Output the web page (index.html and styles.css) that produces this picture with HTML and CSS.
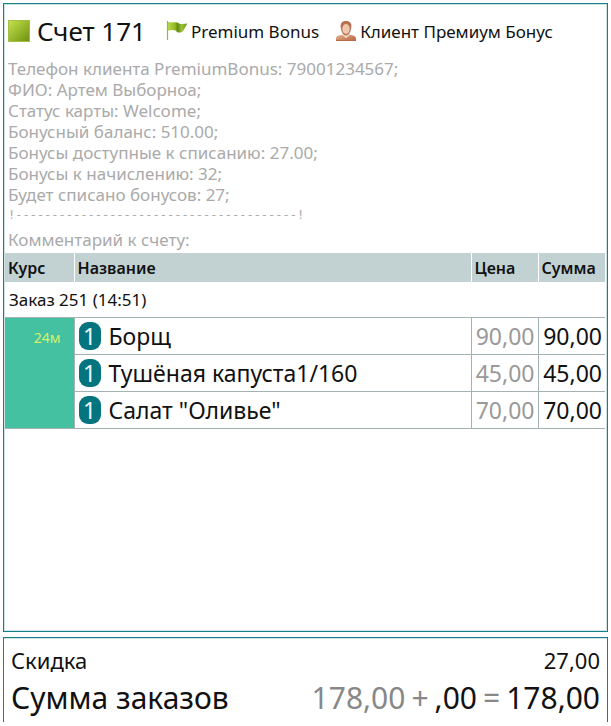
FILE: index.html
```html
<!DOCTYPE html>
<html lang="ru">
<head>
    <meta charset="UTF-8">
    <meta name="viewport" content="width=device-width, initial-scale=1.0">
    <title>Счет 171</title>
    <link rel="stylesheet" href="styles.css">
</head>
<body>
    <main class="panel bill">
        <!-- Bill title and tags -->
        <header class="bill-header">
            <span class="status"></span>
            <h1>Счет 171</h1>
            <div class="tag tag-bonus">
                <svg width="22" height="22" viewBox="0 0 22 22" aria-hidden="true">
                    <defs>
                        <linearGradient id="flag" x1="0" x2="1" y1="0" y2="0">
                            <stop offset="0" stop-color="#b5d84a"/>
                            <stop offset="0.35" stop-color="#94bb25"/>
                            <stop offset="0.5" stop-color="#618b12"/>
                            <stop offset="0.7" stop-color="#9bc432"/>
                            <stop offset="1" stop-color="#688f1c"/>
                        </linearGradient>
                    </defs>
                    <path d="M1.5 1v19" stroke="#96b453" stroke-width="1.2"/>
                    <path d="M2 2c3 .8 6 .2 9 .4 1.500.2 2 1.300 4 1.500 2 .1 4 0 6.500-.3-2 2.500-2.500 5-4.500 7.300-1.500 1.800-4.500 2-6 1-1-1-1-1.500-2.500-1.700-2.500-.3-4-.2-6.500.5z" fill="url(#flag)"/>
                </svg>
                <span>Premium Bonus</span>
            </div>
            <div class="tag">
                <svg width="22" height="22" viewBox="0 0 22 22" aria-hidden="true">
                    <defs>
                        <linearGradient id="skin" x1="0" x2="1" y1="0" y2="1">
                            <stop offset="0" stop-color="#e6b292"/>
                            <stop offset="1" stop-color="#b5633d"/>
                        </linearGradient>
                    </defs>
                    <path d="M1 21v-2.500c0-2.500 3-3 6-3.700l4 3 4-3c3 .7 6 1.200 6 3.700V21z" fill="url(#skin)"/>
                    <path d="M7.500 14.500L11 18l3.500-3.500v-2h-7z" fill="#f0d3bd"/>
                    <path d="M6 9C4.500 3.500 7 1 11 1s6.500 2.500 5 8c-.5 3.500-2.500 6.500-5 6.500S6.500 12.500 6 9z" fill="#b87153"/>
                    <ellipse cx="11" cy="9" rx="3.700" ry="5" fill="#edc8af"/>
                    <path d="M1 20.500h20" stroke="#b56b47"/>
                </svg>
                <span>Клиент Премиум Бонус</span>
            </div>
        </header>

        <!-- Guest details -->
        <div class="details">
            <p>Телефон клиента PremiumBonus: 79001234567;</p>
            <p>ФИО: Артем Выборноа;</p>
            <p>Статус карты: Welcome;</p>
            <p>Бонусный баланс: 510.00;</p>
            <p>Бонусы доступные к списанию: 27.00;</p>
            <p>Бонусы к начислению: 32;</p>
            <p>Будет списано бонусов: 27;</p>
            <p class="divider">!---------------------------------------!</p>
            <p class="comment">Комментарий к счету:</p>
        </div>

        <!-- Order items -->
        <table class="items">
            <thead>
                <tr>
                    <th class="col-course">Курс</th>
                    <th>Название</th>
                    <th class="col-price">Цена</th>
                    <th class="col-sum">Сумма</th>
                </tr>
            </thead>
            <tbody>
                <tr class="order">
                    <td colspan="4">Заказ 251 (14:51)</td>
                </tr>
                <tr class="item">
                    <td class="course" rowspan="3">24м</td>
                    <td><span class="count">1</span>Борщ</td>
                    <td class="price">90,00</td>
                    <td class="sum">90,00</td>
                </tr>
                <tr class="item">
                    <td><span class="count">1</span>Тушёная капуста1/160</td>
                    <td class="price">45,00</td>
                    <td class="sum">45,00</td>
                </tr>
                <tr class="item">
                    <td><span class="count">1</span>Салат "Оливье"</td>
                    <td class="price">70,00</td>
                    <td class="sum">70,00</td>
                </tr>
            </tbody>
        </table>
    </main>

    <!-- Totals -->
    <footer class="panel totals">
        <div class="discount">
            <span>Скидка</span>
            <span>27,00</span>
        </div>
        <div class="total">
            <span>Сумма заказов</span>
            <div class="formula">
                <span class="muted">178,00</span>
                <span class="sign">+</span>
                <span>,00</span>
                <span class="sign">=</span>
                <span>178,00</span>
            </div>
        </div>
    </footer>
</body>
</html>
```
FILE: styles.css
```css
* {
    margin: 0;
    padding: 0;
    box-sizing: border-box;
}

body {
    display: flex;
    flex-direction: column;
    gap: 5px;
    min-height: 100vh;
    padding: 3px 3px 4px;
    background-color: #fff;
    color: #111;
    font-family: "Noto Sans", "Open Sans", sans-serif;
}

.panel {
    border: 1px solid #14808a;
    box-shadow: inset 0 0 0 1px #cfe2e4;
}

.bill {
    flex: 1;
    padding: 2px 2px 2px 1px;
}

/* Header */
.bill-header {
    display: flex;
    align-items: center;
    height: 50px;
    padding: 0 3px;
    white-space: nowrap;
}

.status {
    width: 22px;
    height: 22px;
    margin-right: 7px;
    border: 1px solid #a3bd45;
    background: linear-gradient(135deg, #c3e04c, #6f9210);
}

h1 {
    margin-right: 20px;
    font-size: 26px;
    font-weight: 400;
}

.tag {
    display: flex;
    align-items: center;
    gap: 3px;
    font-size: 17px;
}

.tag-bonus {
    margin-right: 16px;
}

/* Guest details */
.details {
    padding: 2px 3px 3px;
    color: #aaa;
    font-size: 17px;
    line-height: 21px;
}

.divider {
    font-family: "DejaVu Sans Mono", monospace;
    font-size: 12px;
}

.comment {
    margin-top: 3px;
}

/* Items */
.items {
    width: 100%;
    border-collapse: collapse;
    table-layout: fixed;
}

.items th {
    height: 29px;
    padding: 0 3px;
    border-left: 1px solid #fff;
    background-color: #c2d1d1;
    font-size: 16px;
    font-weight: 600;
    text-align: left;
}

.items .col-course {
    width: 69px;
    border-left: 0;
}

.col-price,
.col-sum {
    width: 67px;
}

.order td {
    height: 35px;
    padding: 0 4px;
    font-size: 17px;
}

.item td {
    height: 37px;
    padding: 0 3px;
    border: 1px solid #a3b3b3;
    border-width: 1px 0 1px 1px;
    font-size: 23px;
    line-height: 28px;
    white-space: nowrap;
}

.item .course {
    padding: 6px 13px;
    border-left: 0;
    background-color: #43c1a0;
    color: #d5f06b;
    font-size: 14px;
    text-align: right;
    vertical-align: top;
}

.count {
    display: inline-block;
    width: 22px;
    margin-left: 1px;
    margin-right: 8px;
    border-radius: 9px;
    background-color: #04757f;
    color: #e8f5f5;
    text-align: center;
}

.item .price {
    color: #999;
    text-align: right;
}

.item .sum {
    text-align: right;
}

/* Totals */
.totals {
    padding: 6px 7px 2px;
    border-bottom: 0;
    box-shadow: inset 0 1px #cfe2e4;
}

.discount,
.total {
    display: flex;
    align-items: center;
    justify-content: space-between;
}

.discount {
    font-size: 22px;
    line-height: 32px;
}

.total {
    font-size: 30px;
    line-height: 44px;
}

.formula {
    display: flex;
    align-items: center;
    gap: 6px;
}

.muted,
.sign {
    color: #888;
}
```
